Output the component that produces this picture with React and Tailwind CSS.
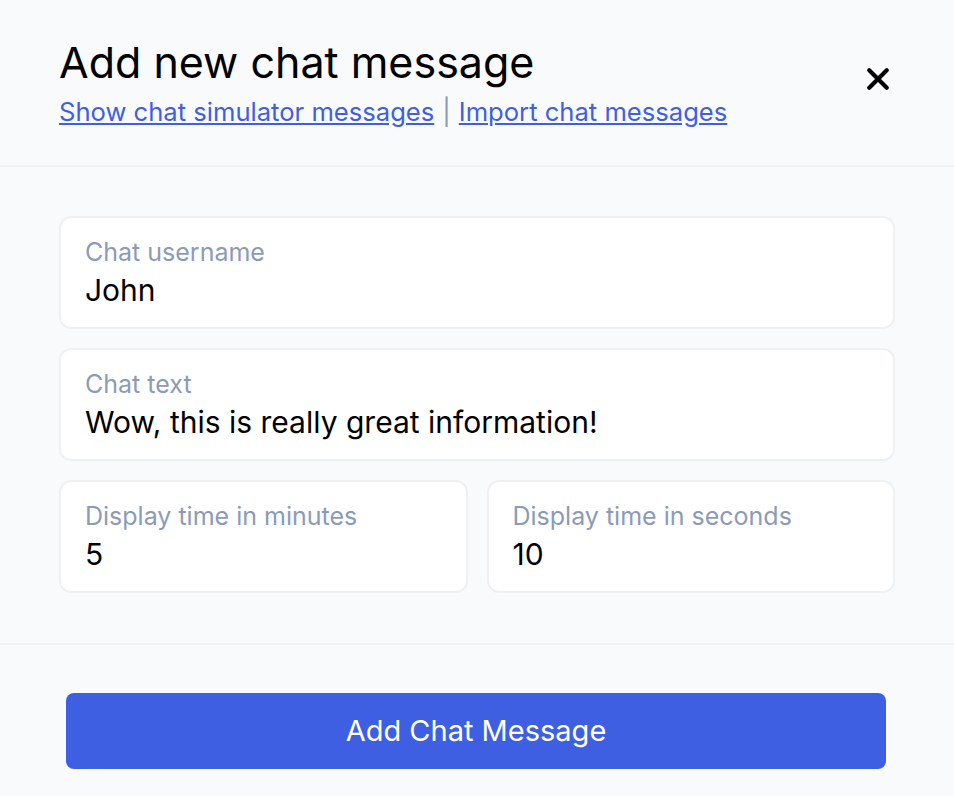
import React from 'react';

const Field = ({ label, value, className = '' }) => (
  <div className={`bg-white border-2 border-[#eef0f4] rounded-xl px-[24px] pt-[18px] pb-[18px] ${className}`}>
    <div className="text-[25px] leading-[32px] text-[#8b9bb7]">{label}</div>
    <div className="text-[30px] leading-[38px] text-black mt-[3px]">{value}</div>
  </div>
);

const App = () => {
  return (
    <div className="min-h-screen w-[954px] h-[796px] bg-[#f9fafc]" style={{ fontFamily: 'Inter, "Noto Sans", sans-serif' }}>
      {/* Header */}
      <header className="h-[167px] border-b-2 border-[#eff1f4] pl-[59px] pr-[62px] pt-[35px] flex justify-between">
        <div>
          <h1 className="text-[43px] leading-[54px] text-black">Add new chat message</h1>
          <div className="text-[25.6px] leading-[34px] flex items-center gap-[8px] mt-[6px]">
            <a href="#" className="text-[#3f5fe3] underline">Show chat simulator messages</a>
            <span className="text-[#8c9bb5]">|</span>
            <a href="#" className="text-[#3f5fe3] underline">Import chat messages</a>
          </div>
        </div>
        <button className="mt-[30px] w-[28px] h-[28px] flex items-center justify-center">
          <svg viewBox="0 0 24 24" className="w-[28px] h-[28px]" fill="none" stroke="black" strokeWidth="3.6" strokeLinecap="round">
            <path d="M4.5 4.5L19.5 19.5M19.5 4.5L4.5 19.5" />
          </svg>
        </button>
      </header>

      {/* Form */}
      <main className="h-[478px] border-b-2 border-[#eff1f4] px-[59px] pt-[49px] flex flex-col gap-[19px]">
        <Field label="Chat username" value="John" />
        <Field label="Chat text" value="Wow, this is really great information!" />
        <div className="grid grid-cols-2 gap-[19px]">
          <Field label="Display time in minutes" value="5" />
          <Field label="Display time in seconds" value="10" />
        </div>
      </main>

      {/* Footer */}
      <footer className="pt-[48px] pl-[66px] pr-[68px]">
        <button className="w-full h-[76px] rounded-lg bg-[#3f5fe3] text-white text-[29px]">Add Chat Message</button>
      </footer>
    </div>
  );
};

export default App;
